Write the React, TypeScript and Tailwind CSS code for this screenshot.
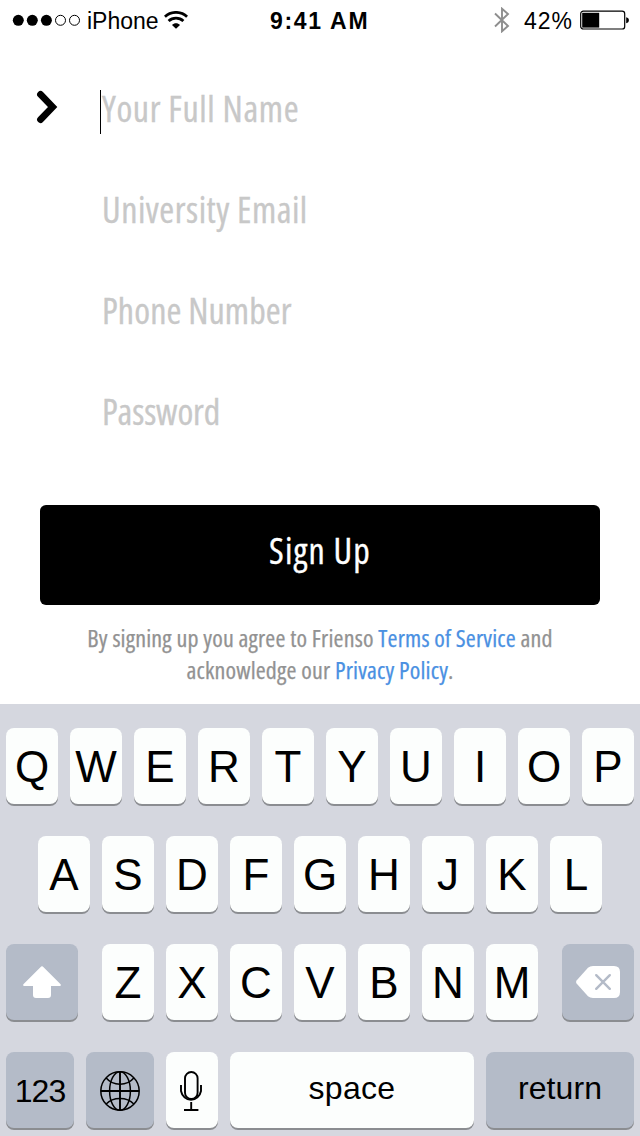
import type { ReactNode } from "react";

const condensed = "font-['Open_Sans',sans-serif] [font-stretch:75%]";

function StatusBar() {
  return (
    <header className="flex h-10 items-center text-[23px] leading-10 text-black">
      <svg className="ml-3 h-3 w-[69px]" viewBox="0 0 69 12">
        <circle cx="6.3" cy="6.3" r="5.5" />
        <circle cx="20.3" cy="6.3" r="5.5" />
        <circle cx="34.4" cy="6.3" r="5.5" />
        <circle cx="48.5" cy="6.3" r="5" fill="none" stroke="black" strokeWidth="1" />
        <circle cx="62.5" cy="6.3" r="5" fill="none" stroke="black" strokeWidth="1" />
      </svg>
      <span className="ml-1.5 w-[73px] pt-0.5">iPhone</span>
      <svg className="ml-1 h-[18px] w-6" viewBox="0 0 24 18" fill="none" stroke="black" strokeWidth="2.8">
        <path d="M0.9 5.8 C7 -0.1 17 -0.1 23.1 5.8" />
        <path d="M4.6 10 C8.7 6.1 15.3 6.1 19.4 10" />
        <path d="M8 14 C10.2 11.6 13.8 11.6 16 14 L12 17.8 Z" fill="black" stroke="none" />
      </svg>
      <span className="ml-[82px] w-[105px] pt-0.5 font-bold tracking-[1.7px]">9:41 AM</span>
      <svg className="ml-[119px] h-[26px] w-4" viewBox="0 0 16 26" fill="none" stroke="#8e8e8e" strokeWidth="1.9">
        <path d="M1 6.5 L14 19 L8 24.3 V1.7 L14 7 L1 19.5" />
      </svg>
      <span className="ml-3.5 w-[52px] pt-0.5 tracking-[1px]">42%</span>
      <svg className="ml-1 h-5 w-[50px]" viewBox="0 0 50 20">
        <rect x="0.7" y="1.2" width="44" height="17.8" rx="2.6" fill="none" stroke="black" strokeWidth="1.2" />
        <rect x="2.2" y="2.8" width="17" height="14.8" />
        <path d="M46.2 7.2 C49.8 7.8 49.8 12.6 46.2 13.2 Z" />
      </svg>
    </header>
  );
}

function Field({ label, tracking, active }: { label: string; tracking: string; active?: boolean }) {
  return (
    <div className="flex h-[101px] items-center pl-9">
      <div className="flex w-16 items-center pb-0.5">
        {active && (
          <svg className="h-9 w-6" viewBox="0 0 24 36" fill="none" stroke="black" strokeWidth="6.8" strokeLinecap="round">
            <path d="M4.5 5.4 L16.6 18 L4.5 30.6" />
          </svg>
        )}
      </div>
      <div className={active ? "mt-2 flex h-11 w-0.5 border-l border-black" : "w-0.5"} />
      <span className={`${condensed} ${tracking} pt-[3px] text-[36px] leading-[44px] text-[#c8c8c8] [-webkit-text-stroke:0.3px_#c8c8c8]`}>
        {label}
      </span>
    </div>
  );
}

function Key({ children, className = "w-[52px] pt-0.5 text-[44px]", dark }: { children: ReactNode; className?: string; dark?: boolean }) {
  return (
    <button
      className={`${className} ${dark ? "bg-[#b4bbc8]" : "bg-[#fcfefd]"} flex h-[76px] shrink-0 items-center justify-center rounded-lg text-black shadow-[0_2px_0_#8b8d91]`}
    >
      {children}
    </button>
  );
}

const letters = (s: string) => s.split("").map((c) => <Key key={c}>{c}</Key>);

function Keyboard() {
  return (
    <section className="flex h-[432px] flex-col gap-8 bg-[#d5d7df] px-1.5 pt-6">
      <div className="flex gap-3">{letters("QWERTYUIOP")}</div>
      <div className="flex justify-center gap-3">{letters("ASDFGHJKL")}</div>
      <div className="flex justify-between">
        <Key dark className="w-[72px]">
          <svg className="h-8 w-[38px]" viewBox="0 0 38 32" fill="white">
            <path d="M18.2 0.6 Q19 -0.1 19.8 0.6 L37.6 18.2 Q38.5 19.9 36.6 20 H28 V29 Q28 32 25 32 H13 Q10 32 10 29 V20 H1.4 Q-0.5 19.9 0.4 18.2 Z" />
          </svg>
        </Key>
        <div className="flex gap-3">{letters("ZXCVBNM")}</div>
        <Key dark className="w-[72px]">
          <svg className="h-8 w-11" viewBox="0 0 44 32">
            <path d="M17 0 H38 Q44 0 44 6 V26 Q44 32 38 32 H17 Q14 32 12 30.2 L0.8 17.8 Q-0.6 16 0.8 14.2 L12 1.8 Q14 0 17 0 Z" fill="white" />
            <path d="M20.2 9.2 L33.8 22.8 M33.8 9.2 L20.2 22.8" stroke="#b4bbc8" strokeWidth="2.4" strokeLinecap="round" />
          </svg>
        </Key>
      </div>
      <div className="flex gap-3">
        <Key dark className="w-[68px] text-[32px]">
          <span className="pt-0.5 tracking-[-1px]">123</span>
        </Key>
        <Key dark className="w-[68px]">
          <svg className="mt-0.5 h-10 w-10" viewBox="0 0 40 40" fill="none" stroke="black" strokeWidth="1.5">
            <circle cx="20" cy="20" r="19.2" />
            <ellipse cx="20" cy="20" rx="10.4" ry="19.2" />
            <path d="M20 1 V39 M1 20 H39" strokeWidth="1.9" />
            <path d="M6.2 7 C13 15.2 27 15.2 33.8 7 M6.2 33 C13 25.6 27 25.6 33.8 33" />
          </svg>
        </Key>
        <Key className="w-[52px]">
          <svg className="ml-[-2px] mt-0.5 h-10 w-[22px]" viewBox="0 0 22 40" fill="none" stroke="black" strokeWidth="1.9">
            <rect x="5" y="1" width="12.6" height="27" rx="6.3" />
            <path d="M1 14 V20 A10.2 11 0 0 0 21 20 V14 M11.2 31 V39 M4 39 H18.4" />
          </svg>
        </Key>
        <Key className="w-[244px] text-[32px]">
          <span className="pb-1 tracking-[0.3px]">space</span>
        </Key>
        <Key dark className="w-[148px] text-[32px]">
          <span className="pb-1 tracking-[0.1px]">return</span>
        </Key>
      </div>
    </section>
  );
}

export default function App() {
  return (
    <main className="flex h-[1136px] w-[640px] flex-col overflow-hidden bg-white font-['Liberation_Sans',Arial,sans-serif]">
      <StatusBar />
      <form className="flex h-[465px] flex-col pt-[17px]">
        <Field label="Your Full Name" tracking="tracking-[0.6px]" active />
        <Field label="University Email" tracking="tracking-[0.5px]" />
        <Field label="Phone Number" tracking="tracking-[0.1px]" />
        <Field label="Password" tracking="tracking-[-0.15px]" />
      </form>
      <button className={`${condensed} mx-10 h-[100px] shrink-0 rounded-md bg-black pb-2 text-[36px] tracking-[1.1px] text-white [-webkit-text-stroke:0.3px_white]`}>
        Sign Up
      </button>
      <p className={`${condensed} mt-[17px] h-[82px] text-center text-[24px] leading-8 tracking-[0.18px] text-[#929292] [-webkit-text-stroke:0.25px]`}>
        By signing up you agree to Frienso <a className="text-[#4a90e2]">Terms of Service</a> and
        <br />
        acknowledge our <a className="text-[#4a90e2]">Privacy Policy</a>.
      </p>
      <Keyboard />
    </main>
  );
}
